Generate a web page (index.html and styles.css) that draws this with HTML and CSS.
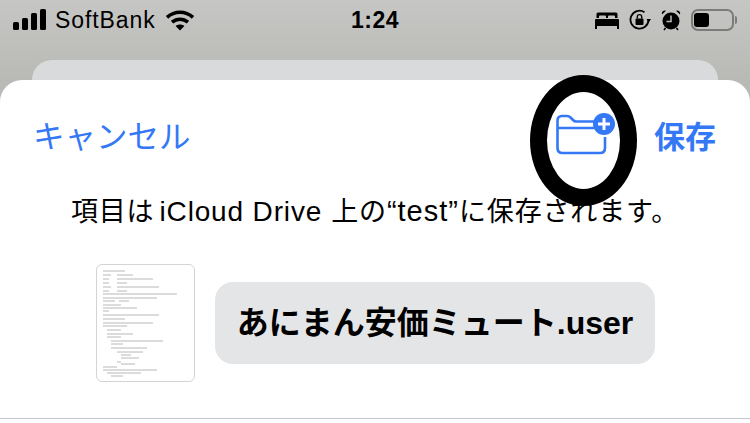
FILE: index.html
```html
<!DOCTYPE html>
<html lang="ja">
<head>
  <meta charset="utf-8">
  <meta name="viewport" content="width=device-width, initial-scale=1.0"/>
  <title>保存</title>
  <link rel="stylesheet" href="styles.css">
</head>
<body>

  <div class="status-bar">
    <div class="status-left">
      <svg class="signal" width="33" height="22" viewBox="0 0 33 22" fill="#000">
        <rect x="0" y="13" width="6" height="8" rx="1.5"/>
        <rect x="9" y="9" width="6" height="12" rx="1.5"/>
        <rect x="18" y="4" width="6" height="17" rx="1.5"/>
        <rect x="27" y="0" width="6" height="21" rx="1.5"/>
      </svg>
      <span class="carrier">SoftBank</span>
      <svg class="wifi" width="30" height="22" viewBox="0 0 30 22" fill="none" stroke="#000" stroke-width="3.6">
        <path d="M2 8.400 C9.500 1.600 20.500 1.600 28 8.400"/>
        <path d="M7 13.200 C11.800 9.200 18.200 9.200 23 13.200"/>
        <path d="M15 21.500 L10.600 17 C13 15 17 15 19.400 17 Z" fill="#000" stroke="none"/>
      </svg>
    </div>
    <div class="time">1:24</div>
    <div class="status-right">
      <svg width="24" height="18" viewBox="0 0 24 18" fill="#000">
        <path d="M3 1.500 H21 Q22.500 1.500 22.500 3 V7 H20 V5.500 Q20 4.500 19 4.500 H14 Q13 4.500 13 5.500 V7 H11 V5.500 Q11 4.500 10 4.500 H5 Q4 4.500 4 5.500 V7 H1.500 V3 Q1.500 1.500 3 1.500 Z"/>
        <path d="M1 8 H23 Q24 8 24 9 V14 H24 V18 H22 V15 H2 V18 H0 V9 Q0 8 1 8 Z"/>
      </svg>
      <svg width="22" height="22" viewBox="0 0 22 22" fill="none">
        <path d="M19.500 11 A9 9 0 1 1 15.500 3.200" stroke="#000" stroke-width="1.800"/>
        <path d="M17.500 10 L22 10 L19.700 13.500 Z" fill="#000"/>
        <rect x="6.500" y="9.500" width="8" height="6.500" rx="1" fill="#000"/>
        <path d="M8.300 9.500 V7.800 A2.200 2.200 0 0 1 12.700 7.800 V9.500" stroke="#000" stroke-width="1.400"/>
      </svg>
      <svg width="20" height="22" viewBox="0 0 20 22" fill="none">
        <circle cx="10" cy="12" r="8.500" fill="#000"/>
        <path d="M10 6.500 V12.500 H5.500" stroke="#bdbebb" stroke-width="1.500"/>
        <path d="M1 5.500 L5 1.700 A3 3 0 0 0 1 5.500 Z M19 5.500 L15 1.700 A3 3 0 0 1 19 5.500 Z" fill="#000"/>
        <path d="M4.500 19 L3 21 M15.500 19 L17 21" stroke="#000" stroke-width="1.600"/>
      </svg>
      <div class="battery"><div class="battery-level"></div></div>
      <div class="battery-nub"></div>
    </div>
  </div>

  <div class="back-card"></div>

  <div class="sheet">
    <div class="sheet-header">
      <span class="cancel">キャンセル</span>
      <div class="header-actions">
        <svg class="folder-add" width="60" height="42" viewBox="0 0 60 42" fill="none">
          <path d="M38 8.500 H20 Q18.500 8.500 17 7 L14.500 4.500 Q13 3 11 3 H6 Q1.500 3 1.500 7.500 V35 Q1.500 40 6.500 40 H44 Q49 40 49 35 V24" stroke="#3478f6" stroke-width="2.600"/>
          <path d="M2 15 H38" stroke="#3478f6" stroke-width="2.600"/>
          <circle cx="48" cy="11" r="11" fill="#3478f6"/>
          <path d="M48 5 V17 M42 11 H54" stroke="#fff" stroke-width="3"/>
        </svg>
        <span class="save">保存</span>
      </div>
    </div>

    <p class="message">項目は<span class="latin">iCloud Drive</span>上の<span class="quoted">“test”</span>に保存されます。</p>

    <div class="file-row">
      <div class="thumb">
        <svg width="97" height="116" viewBox="0 0 97 116" fill="none" stroke="#8a8a8a" stroke-width="0.800" opacity="0.75">
          <path d="M6 6 H28 M6 10 H14 M20 10 H36 M6 14 H12 M20 14 H56 M6 18 H12 M20 18 H30 M6 22 H14 M20 22 H62 M6 26 H12 M20 26 H30"/>
          <path d="M6 29 H80 M6 33 H60 M6 36 H18 M22 36 H32 M6 40 H24 M6 43 H40 M6 46 H12"/>
          <path d="M6 50 H62 M6 54 H28 M6 58 H56 M6 61 H30"/>
          <path d="M10 65 H24 M10 69 H36 M10 72 H24 M14 76 H66 M14 79 H26 M14 83 H50 M20 87 H46 M24 90 H34 M24 93 H42 M20 97 H24 M24 99 H38"/>
          <path d="M6 102 H20 M6 105 H60 M10 108 H44 M14 111 H26"/>
        </svg>
      </div>
      <div class="name-pill">あにまん安価ミュート.user</div>
    </div>

    <div class="sheet-footer"></div>
  </div>

  <!-- marker circle drawn over the screenshot -->
  <div class="marker"></div>

</body>
</html>
```

FILE: styles.css
```css
body {
  position: relative;
  width: 750px;
  height: 423px;
  margin: 0;
  overflow: hidden;
  background: linear-gradient(#c6c7c4, #b9bab6 80px);
  font-family: "Liberation Sans", "Noto Sans CJK JP", sans-serif;
  color: #000;
}
.status-bar {
  display: grid;
  grid-template-columns: 1fr auto 1fr;
  align-items: center;
  height: 40px;
  padding: 0 13px;
}
.status-left {
  display: flex;
  align-items: center;
}
.signal {
  margin-right: 9px;
}
.carrier {
  font-size: 23px;
  letter-spacing: 0.9px;
  margin-right: 9px;
}
.time {
  font-size: 23px;
  font-weight: bold;
  letter-spacing: 0.5px;
}
.status-right {
  display: flex;
  align-items: center;
  justify-content: flex-end;
  gap: 10px;
}
.battery {
  width: 43px;
  height: 22px;
  box-sizing: border-box;
  border: 2px solid #7b7c7a;
  border-radius: 7px;
  padding: 2px 1px;
}
.battery-level {
  width: 15px;
  height: 14px;
  background: #000;
  border-radius: 3px;
}
.battery-nub {
  width: 2px;
  height: 8px;
  margin-left: -9px;
  background: #7b7c7a;
  border-radius: 0 2px 2px 0;
}
.back-card {
  height: 20px;
  margin: 20px 32px 0;
  background: #d9dadb;
  border-radius: 20px 20px 0 0;
}
.sheet {
  display: flex;
  flex-direction: column;
  height: 343px;
  background: #fff;
  border-radius: 22px 22px 0 0;
}
.sheet-header {
  display: flex;
  justify-content: space-between;
  align-items: center;
  height: 40px;
  padding: 34px 34px 0 33px;
}
.cancel {
  font-size: 31.500px;
  color: #3478f6;
}
.header-actions {
  display: flex;
  align-items: center;
  gap: 38px;
}
.save {
  font-size: 31px;
  font-weight: bold;
  color: #3478f6;
}
.message {
  margin: 37px 0 0;
  font-size: 27px;
  letter-spacing: 0.85px;
  line-height: 40px;
  text-align: center;
  white-space: nowrap;
}
.latin {
  margin: 0 9px 0 5px;
  font-size: 28px;
}
.quoted {
  font-size: 29px;
  letter-spacing: 1px;
}
.file-row {
  display: flex;
  align-items: center;
  gap: 20px;
  padding-left: 96px;
  margin-top: 32px;
}
.thumb {
  width: 97px;
  height: 116px;
  border: 1px solid #d4d4d4;
  border-radius: 6px;
}
.name-pill {
  width: 440px;
  height: 82px;
  background: #e4e5e7;
  border-radius: 18px;
  font-size: 32px;
  font-weight: bold;
  line-height: 82px;
  text-align: center;
}
.sheet-footer {
  height: 4px;
  margin-top: auto;
  border-top: 1px solid #c8c8cc;
}
.marker {
  position: absolute;
  left: 530px;
  top: 75px;
  width: 107px;
  height: 131px;
  box-sizing: border-box;
  border: 17px solid #000;
  border-radius: 50%;
}
```
